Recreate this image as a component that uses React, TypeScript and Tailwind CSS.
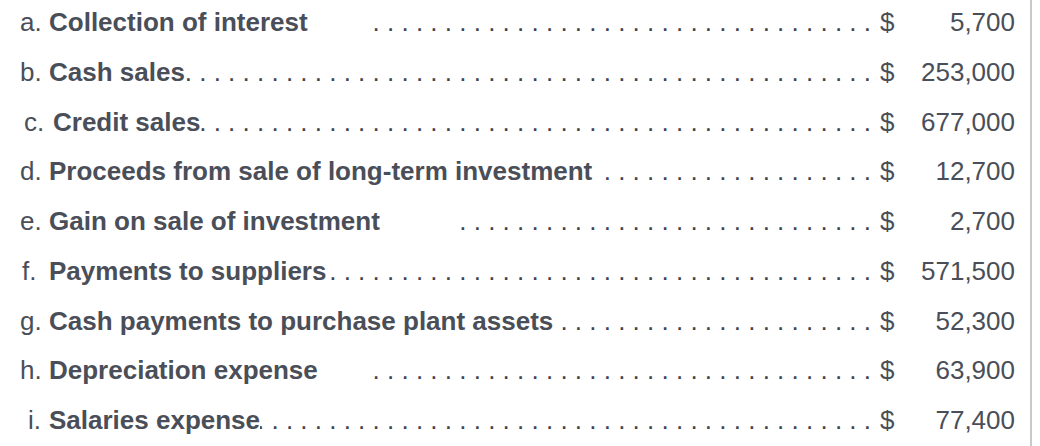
const rows = [
  { letter: "a.", label: "Collection of interest", amount: "5,700", letterCls: "w-[29px]", dotsCls: "ml-[64px]" },
  { letter: "b.", label: "Cash sales", amount: "253,000", letterCls: "w-[29px]", dotsCls: "" },
  { letter: "c.", label: "Credit sales", amount: "677,000", letterCls: "w-[33px] pl-[4px]", dotsCls: "" },
  { letter: "d.", label: "Proceeds from sale of long-term investment", amount: "12,700", letterCls: "w-[29px]", dotsCls: "ml-[6px]" },
  { letter: "e.", label: "Gain on sale of investment", amount: "2,700", letterCls: "w-[29px]", dotsCls: "ml-[81px]" },
  { letter: "f.", label: "Payments to suppliers", amount: "571,500", letterCls: "w-[29px] pl-[2px]", dotsCls: "" },
  { letter: "g.", label: "Cash payments to purchase plant assets", amount: "52,300", letterCls: "w-[29px]", dotsCls: "ml-[6px]" },
  { letter: "h.", label: "Depreciation expense", amount: "63,900", letterCls: "w-[29px]", dotsCls: "ml-[56px]" },
  { letter: "i.", label: "Salaries expense", amount: "77,400", letterCls: "w-[29px] pl-[8px]", dotsCls: "" },
];

const leader = Array(48).fill(".").join(" ");

const Row = ({ row }: { row: (typeof rows)[number] }) => {
  return (
    <div className="flex h-[30px] items-center whitespace-nowrap leading-[30px]">
      <span className={`shrink-0 ${row.letterCls}`}>{row.letter}</span>
      <span className="shrink-0 font-bold">{row.label}</span>
      <div className={`flex min-w-0 flex-1 justify-end overflow-hidden text-[#40444e] ${row.dotsCls}`}>
        <span>{leader}</span>
      </div>
      <div className="ml-[9px] flex w-[135px] shrink-0 justify-between">
        <span>$</span>
        <span>{row.amount}</span>
      </div>
    </div>
  );
};

export default function App() {
  return (
    <div className="flex h-[446px] w-[1040px] bg-white font-['Liberation_Sans',Arial,sans-serif] text-[26px] text-[#4a4e58]">
      <div className="flex w-[1032px] flex-col gap-[19.75px] border-r-2 border-[#c9c9c9] pl-[20px] pr-[15px] pt-[7px]">
        {rows.map((row) => (
          <Row key={row.letter} row={row} />
        ))}
      </div>
    </div>
  );
}
